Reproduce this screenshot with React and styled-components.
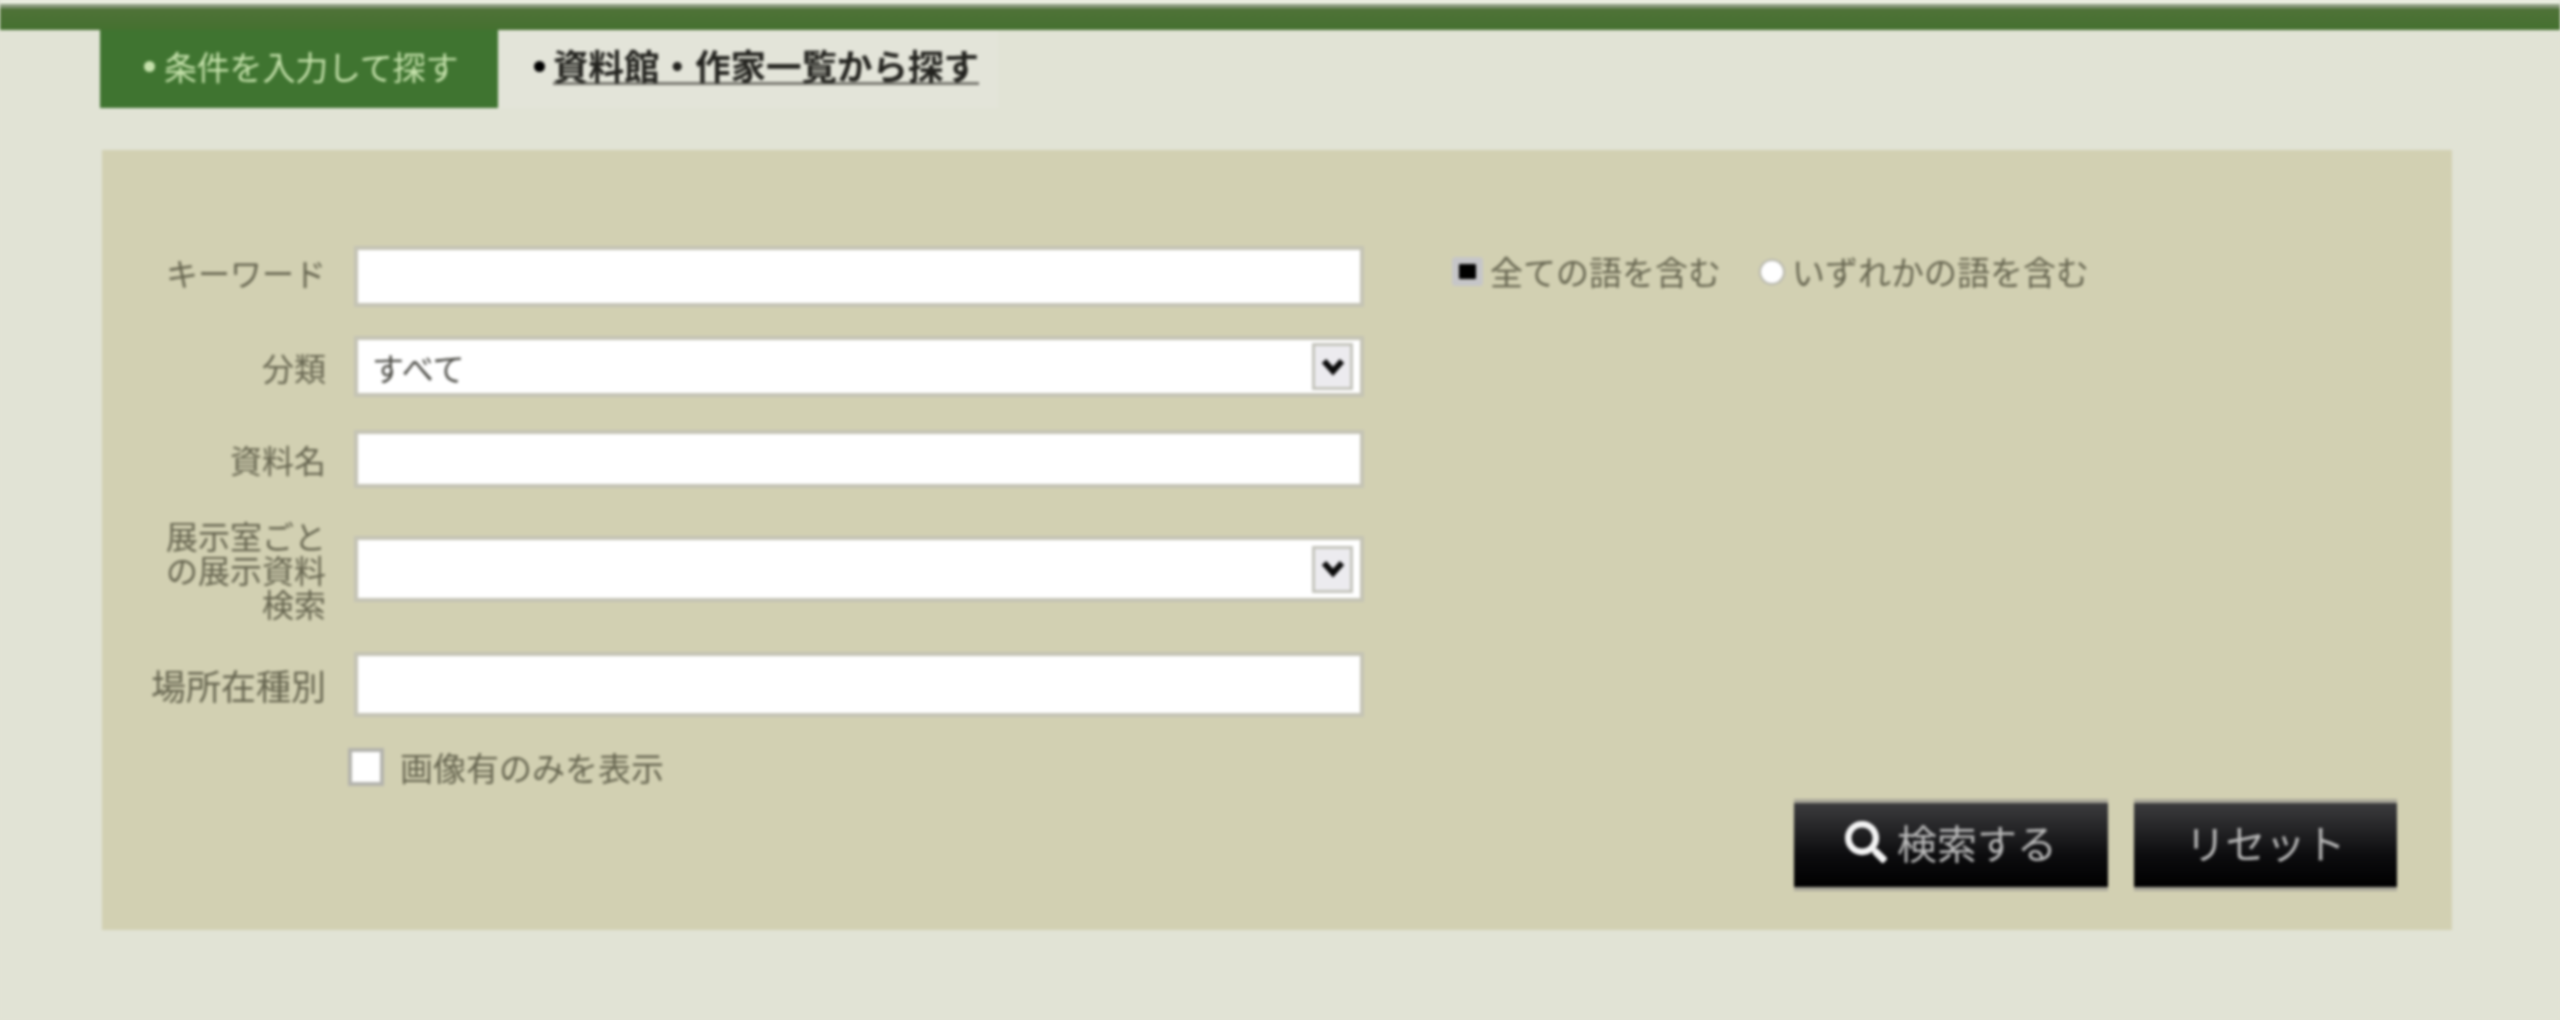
import React from "react"
import styled, { createGlobalStyle } from "styled-components"
import { FaSearch } from "react-icons/fa"

const GlobalStyle = createGlobalStyle`
    html, body {
        margin: 0;
        padding: 0;
        background: #e1e3d5;
    }
    body {
        font-family: "Noto Sans CJK JP", "Liberation Sans", sans-serif;
    }
`
const Page = styled.div`
    height: 1020px;
    overflow: hidden;
    background: #e1e3d5;
    filter: blur(1.4px);
`
const TopStrip = styled.div`
    height: 4px;
    background: #eef2e4;
    border-bottom: 4px solid #87977a;
`
const TopBar = styled.div`
    height: 22px;
    background: linear-gradient(#4f7238, #44702f);
`
const Tabs = styled.nav`
    display: flex;
    height: 78px;
    margin-left: 100px;
`
const ActiveTab = styled.a`
    display: flex;
    align-items: center;
    gap: 9px;
    width: 398px;
    box-sizing: border-box;
    padding: 0 0 6px 44px;
    background: #3f7430;
    color: #c6e2ac;
    font-size: 33px;
    letter-spacing: -0.2px;
    line-height: 1;
    white-space: nowrap;
`
const PlainTab = styled.a`
    display: flex;
    align-items: center;
    gap: 8px;
    width: 500px;
    box-sizing: border-box;
    padding: 0 0 6px 36px;
    background: #e3e4d9;
    color: #22221e;
    font-size: 35.5px;
    font-weight: 700;
    line-height: 1;
    white-space: nowrap;
    span {
        border-bottom: 3px solid #77776f;
    }
`
const Bullet = styled.i`
    flex: none;
    width: 11px;
    height: 11px;
    border-radius: 50%;
    background: ${props => props.$color};
`
const Panel = styled.form`
    display: flex;
    flex-direction: column;
    width: 2350px;
    height: 780px;
    box-sizing: border-box;
    margin: 42px 0 0 102px;
    padding: 100px 55px 0 40px;
    background: #d2d0b2;
`
const Row = styled.div`
    display: flex;
    align-items: center;
    height: ${props => props.$height}px;
    margin-top: ${props => props.$top || 0}px;
`
const Label = styled.label`
    flex: none;
    width: 184px;
    margin-right: 32px;
    padding-bottom: ${props => props.$lift || 0}px;
    color: #65644f;
    font-size: ${props => props.$size || 32}px;
    line-height: 34px;
    text-align: right;
    white-space: ${props => (props.$size ? "nowrap" : "normal")};
`
const TextInput = styled.input`
    display: block;
    width: 1002px;
    height: 100%;
    box-sizing: border-box;
    border: 0;
    background: #fff;
    box-shadow: 0 0 0 4px #c4c3b4;
`
const SelectBox = styled.div`
    display: flex;
    align-items: center;
    justify-content: space-between;
    width: 1002px;
    height: 100%;
    box-sizing: border-box;
    padding: 0 7px 0 14px;
    background: #fff;
    box-shadow: 0 0 0 4px #c4c3b4;
    color: #4a4a44;
    font-size: 32px;
    line-height: 1;
`
const SelectArrow = styled.span`
    display: flex;
    align-items: center;
    justify-content: center;
    width: 41px;
    height: 47px;
    box-sizing: border-box;
    background: #ecebef;
    border: 3px solid #c4c4bc;
`
const RadioGroup = styled.div`
    display: flex;
    align-items: center;
    margin-left: 99px;
    color: #65644f;
    font-size: 33px;
    line-height: 1;
    white-space: nowrap;
    padding-bottom: 10px;
`
const RadioOption = styled.label`
    display: flex;
    align-items: center;
    margin-right: ${props => props.$gap || 0}px;
`
const RadioDot = styled.i`
    flex: none;
    width: ${props => (props.$on ? 17 : 22)}px;
    height: ${props => (props.$on ? 15 : 22)}px;
    margin-right: ${props => (props.$on ? 14 : 9)}px;
    border-radius: ${props => (props.$on ? "1px" : "50%")};
    background: ${props => (props.$on ? "#000" : "#fff")};
    box-shadow: 0 0 0 ${props => (props.$on ? "7px #c6c6c8" : "2px #b5b5ac")};
`
const CheckRow = styled.label`
    display: flex;
    align-items: center;
    height: 40px;
    margin: 34px 0 0 206px;
    color: #65644f;
    font-size: 33px;
    line-height: 1;
`
const CheckBox = styled.i`
    flex: none;
    width: 28px;
    height: 30px;
    margin-right: 16px;
    background: #fff;
    border: 4px solid #b3b3ac;
`
const Buttons = styled.div`
    display: flex;
    justify-content: flex-end;
    gap: 26px;
    margin-top: 16px;
`
const Button = styled.button`
    display: flex;
    align-items: center;
    justify-content: center;
    gap: 10px;
    width: ${props => props.$width}px;
    height: 84px;
    padding: 0 0 6px;
    border: 0;
    background: linear-gradient(#3c3c3e, #0c0c0e 62%, #000);
    box-shadow: 0 -4px 0 #aaa89a, 0 4px 0 #aaa89a;
    color: #b9b9b9;
    font-family: "Noto Sans CJK JP", "Liberation Sans", sans-serif;
    font-size: 40px;
    line-height: 1;
    svg {
        color: #f4f4f4;
    }
`

const Chevron = () => (
    <svg width="24" height="18" viewBox="0 0 24 18">
        <path d="M3 3l9 10 9-10" fill="none" stroke="#0b0b0b" strokeWidth="6" />
    </svg>
)

export default () => (
    <Page>
        <GlobalStyle />
        <TopStrip />
        <TopBar />
        <Tabs>
            <ActiveTab><Bullet $color="#c6e2ac" />条件を入力して探す</ActiveTab>
            <PlainTab><Bullet $color="#000" /><span>資料館・作家一覧から探す</span></PlainTab>
        </Tabs>
        <Panel>
            <Row $height={53}>
                <Label $lift={10}>キーワード</Label>
                <TextInput />
                <RadioGroup>
                    <RadioOption $gap={40}><RadioDot $on />全ての語を含む</RadioOption>
                    <RadioOption><RadioDot />いずれかの語を含む</RadioOption>
                </RadioGroup>
            </Row>
            <Row $height={53} $top={37}>
                <Label>分類</Label>
                <SelectBox>すべて<SelectArrow><Chevron /></SelectArrow></SelectBox>
            </Row>
            <Row $height={50} $top={41}>
                <Label>資料名</Label>
                <TextInput />
            </Row>
            <Row $height={58} $top={56}>
                <Label>展示室ごとの展示資料検索</Label>
                <SelectBox><span /><SelectArrow><Chevron /></SelectArrow></SelectBox>
            </Row>
            <Row $height={57} $top={58}>
                <Label $size={35}>場所在種別</Label>
                <TextInput />
            </Row>
            <CheckRow><CheckBox />画像有のみを表示</CheckRow>
            <Buttons>
                <Button type="button" $width={314}><FaSearch size={42} />検索する</Button>
                <Button type="button" $width={263}>リセット</Button>
            </Buttons>
        </Panel>
    </Page>
)
